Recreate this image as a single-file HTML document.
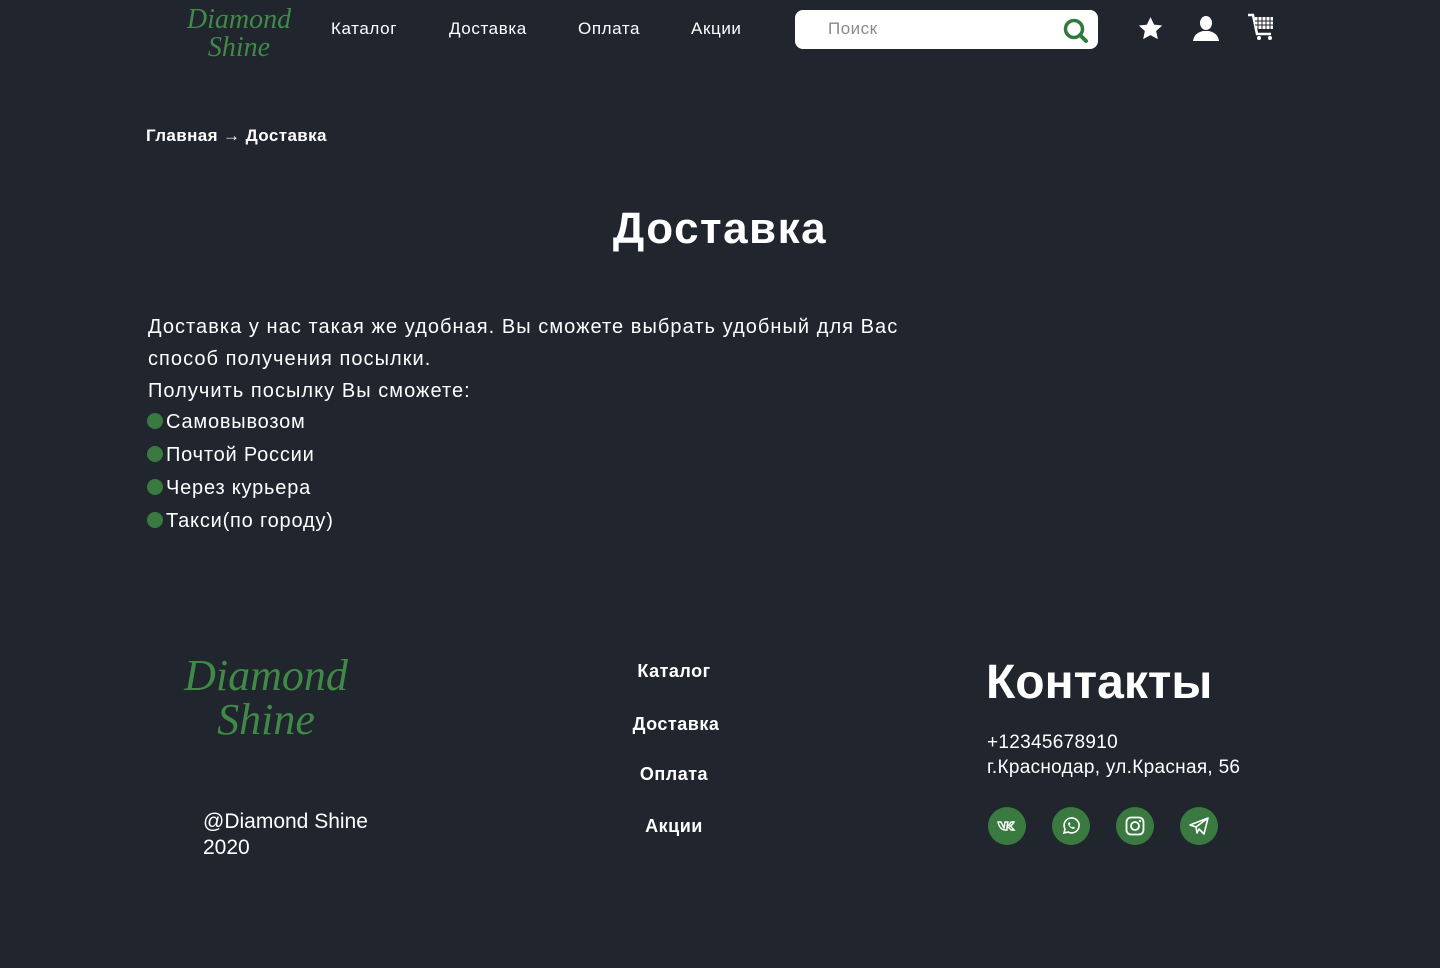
<!DOCTYPE html>
<html><head><meta charset="utf-8"><style>
*{margin:0;padding:0;box-sizing:border-box}
body{width:1440px;height:968px;background:#20252e;color:#fff;font-family:"Liberation Sans","DejaVu Sans",sans-serif;position:relative;overflow:hidden}
.a{position:absolute;white-space:nowrap}
.logo{font-family:"Liberation Serif",serif;font-style:italic;color:#3f8a47;text-align:center;line-height:1}
.nav{font-size:17px;top:19px;letter-spacing:0.6px}
.dot{display:inline-block;width:16px;height:16px;border-radius:50%;background:#3a7a40;vertical-align:-1px;margin-right:3px}
.li{font-size:20px;left:147px;letter-spacing:0.8px}
.fl{font-size:18px;font-weight:bold;text-align:center;width:200px;letter-spacing:0.5px}
.soc{position:absolute;top:807px;width:38px;height:38px;border-radius:50%;background:#3a7a40}
.soc svg{position:absolute;left:9px;top:9px}
</style></head><body>
<div class="a logo" style="left:180px;top:6px;width:118px;font-size:28px">Diamond<br>Shine</div>
<div class="a nav" style="left:331px">Каталог</div>
<div class="a nav" style="left:449px">Доставка</div>
<div class="a nav" style="left:578px">Оплата</div>
<div class="a nav" style="left:691px">Акции</div>
<div class="a" style="left:795px;top:10px;width:303px;height:39px;background:#fff;border-radius:8px"></div>
<div class="a" style="left:828px;top:19px;font-size:17px;color:#8a8a8a;letter-spacing:0.5px">Поиск</div>
<svg class="a" style="left:1062px;top:16px" width="28" height="28" viewBox="0 0 28 28"><circle cx="12" cy="13" r="8.5" fill="none" stroke="#2f7a3c" stroke-width="3.5"/><path d="M18 19l6 6" stroke="#2f7a3c" stroke-width="4" stroke-linecap="round"/></svg>
<svg class="a" style="left:1137px;top:16px" width="27" height="26" viewBox="0 0 24 24"><path d="M12 1l3.3 7 7.5.8-5.6 5.1 1.6 7.5L12 17.6 5.2 21.4l1.6-7.5L1.2 8.8 8.7 8z" fill="#fff"/></svg>
<svg class="a" style="left:1192px;top:14px" width="28" height="28" viewBox="0 0 28 28"><ellipse cx="14" cy="9" rx="6" ry="7" fill="#fff"/><path d="M1 27c1-7 6-9 10-10h6c4 1 9 3 10 10z" fill="#fff"/></svg>
<svg class="a" style="left:1247px;top:12px" width="28" height="30" viewBox="0 0 28 30"><path d="M1 3h5l4 19h14" fill="none" stroke="#fff" stroke-width="2.5"/><rect x="8" y="5" width="18" height="12" fill="#fff"/><path d="M11 5v12M15 5v12M19 5v12M23 5v12M8 9h18M8 13h18" stroke="#20252e" stroke-width="1"/><circle cx="12" cy="26" r="2" fill="#fff"/><circle cx="23" cy="26" r="2" fill="#fff"/></svg>
<div class="a" style="left:146px;top:126px;font-size:17px;font-weight:bold;letter-spacing:0.4px">Главная → Доставка</div>
<div class="a" style="left:0;width:1440px;text-align:center;top:204px;font-size:44px;font-weight:bold;letter-spacing:1.5px">Доставка</div>
<div class="a" style="left:148px;top:311px;font-size:20px;line-height:32px;letter-spacing:1.05px">Доставка у нас такая же удобная. Вы сможете выбрать удобный для Вас<br>способ получения посылки.<br>Получить посылку Вы сможете:</div>
<div class="a li" style="top:411px"><span class="dot"></span>Самовывозом</div>
<div class="a li" style="top:444px"><span class="dot"></span>Почтой России</div>
<div class="a li" style="top:477px"><span class="dot"></span>Через курьера</div>
<div class="a li" style="top:510px"><span class="dot"></span>Такси(по городу)</div>
<div class="a logo" style="left:176px;top:654px;width:180px;font-size:44px">Diamond<br>Shine</div>
<div class="a" style="left:203px;top:809px;font-size:21px;line-height:26px">@Diamond Shine<br>2020</div>
<div class="a fl" style="left:574px;top:661px">Каталог</div>
<div class="a fl" style="left:576px;top:714px">Доставка</div>
<div class="a fl" style="left:574px;top:764px">Оплата</div>
<div class="a fl" style="left:574px;top:816px">Акции</div>
<div class="a" style="left:986px;top:655px;font-size:48px;font-weight:bold">Контакты</div>
<div class="a" style="left:987px;top:730px;font-size:19px;line-height:25px;letter-spacing:0.3px">+12345678910<br>г.Краснодар, ул.Красная, 56</div>
<div class="soc" style="left:988px"><svg width="20" height="20" viewBox="0 0 20 20"><path d="M1 6h3l3 6 1-6h3l-1 4c2 0 3-3 4-4h3c-1 2-2 3-4 4 2 1 3 3 4 4h-3c-1-1-2-3-4-3v3h-2c-3 0-6-3-7-8z" fill="none" stroke="#fff" stroke-width="1.4"/></svg></div>
<div class="soc" style="left:1052px"><svg width="20" height="20" viewBox="0 0 20 20"><path d="M3 17l1-4a7.5 7.5 0 1 1 3 3z" fill="none" stroke="#fff" stroke-width="1.6"/><path d="M7 7c0 3 3 6 6 6l1-1.5-2-1-1 1c-1-.5-2-1.5-2.5-2.5l1-1-1-2z" fill="#fff"/></svg></div>
<div class="soc" style="left:1116px"><svg width="20" height="20" viewBox="0 0 20 20"><rect x="1.5" y="1.5" width="17" height="17" rx="4.5" fill="none" stroke="#fff" stroke-width="1.8"/><circle cx="10" cy="10" r="4" fill="none" stroke="#fff" stroke-width="1.8"/><circle cx="15" cy="5" r="1.1" fill="#fff"/></svg></div>
<div class="soc" style="left:1180px"><svg width="20" height="20" viewBox="0 0 20 20"><path d="M1 9L19 2l-4 16-5-5-2 4-1-6z M7 11l12-9" fill="none" stroke="#fff" stroke-width="1.6" stroke-linejoin="round"/></svg></div>
</body></html>
